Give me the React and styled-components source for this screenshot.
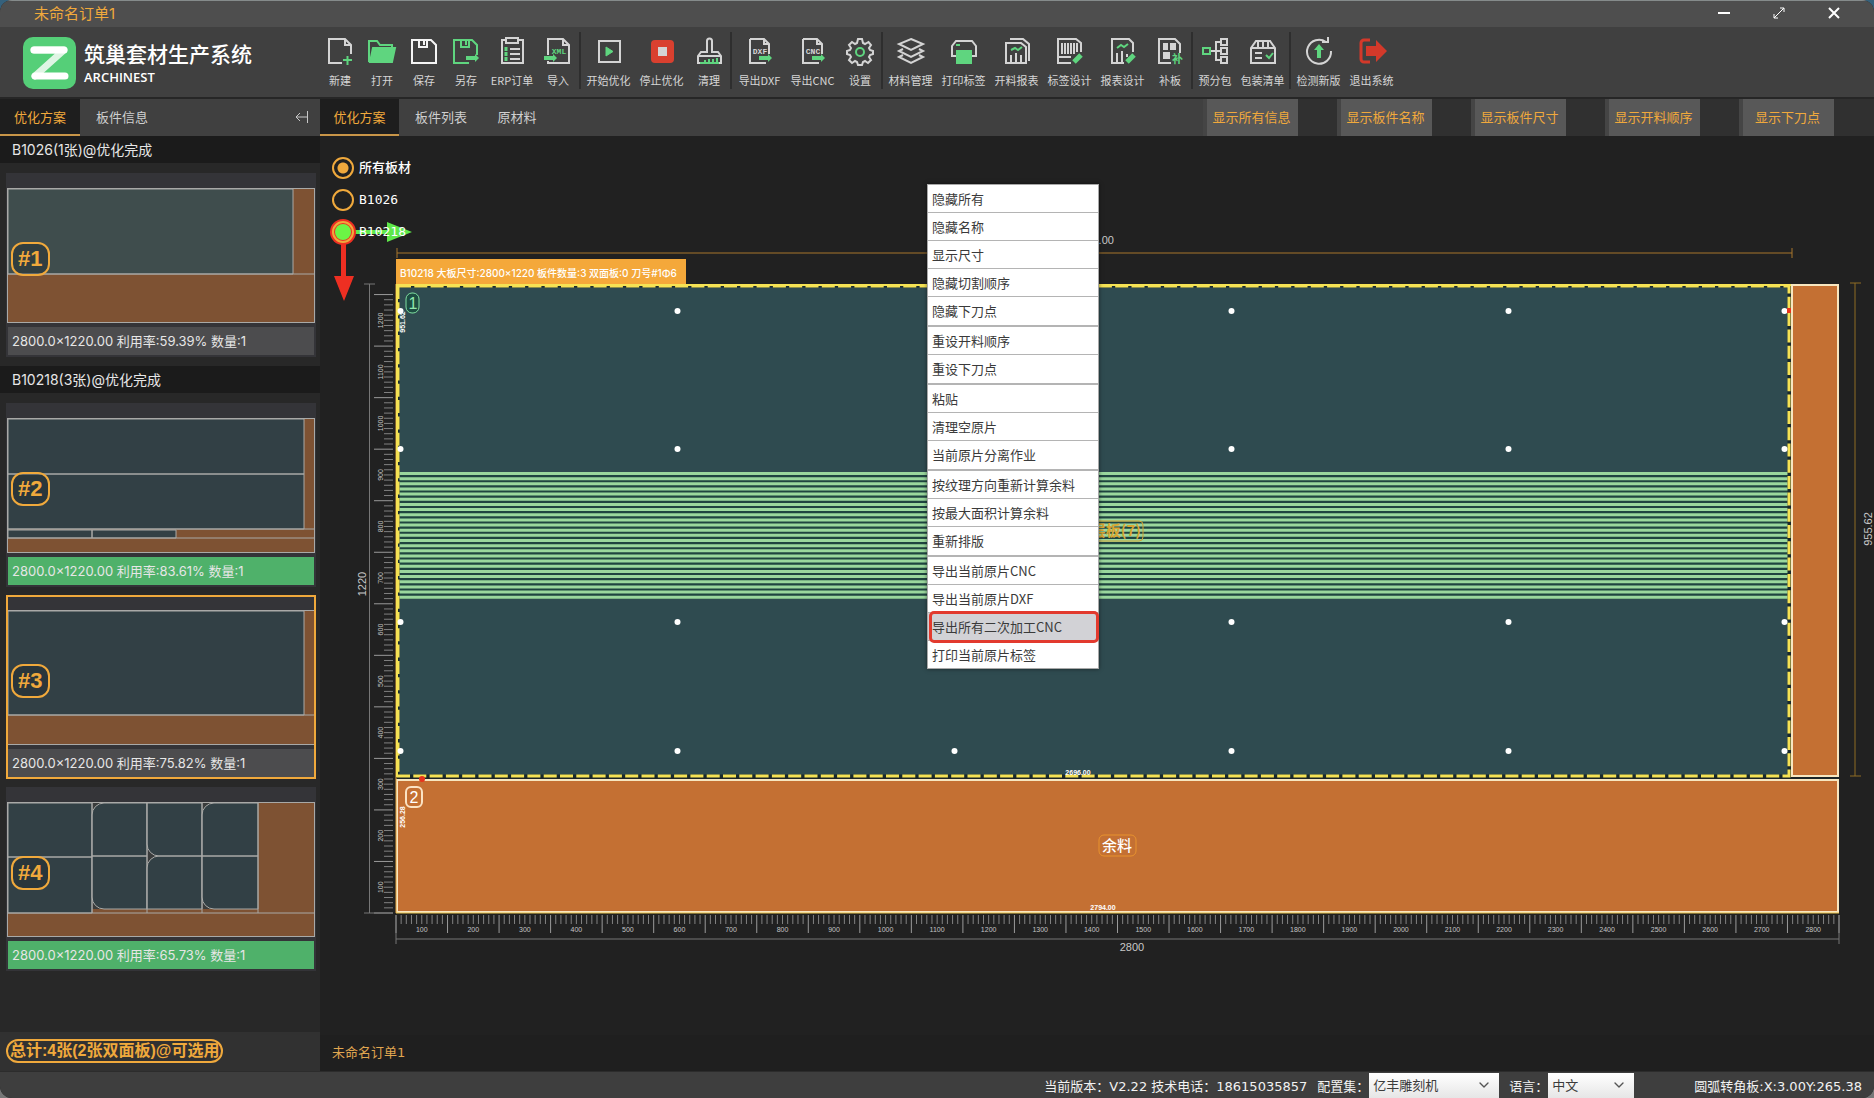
// Nesting workspace: toolbar, sheet list and cutting canvas
import { useState } from 'react'
import styled, { createGlobalStyle } from 'styled-components'
import { ChevronDown } from 'lucide-react'

const uiFont = `Inter, "Noto Sans CJK SC", sans-serif`
const cjkFont = `"Noto Sans CJK SC", sans-serif`
const gold = '#f0a93c'
const grey = '#d4d4d4'
const green = '#5fd57f'

const GlobalStyle = createGlobalStyle`
    * { box-sizing: border-box; }
    body {
        margin: 0;
        background: linear-gradient(#35617c, #777777);
        font-family: ${uiFont};
        font-size: 13px;
        color: #e6e6e6;
    }
    button, select, input { font: inherit; color: inherit; margin: 0; }
    button { border: 0; padding: 0; background: none; }
`

const Window = styled.div`
    min-height: 100vh;
    display: flex;
    flex-direction: column;
    background: #212121;
    border-radius: 12px;
    overflow: hidden;
`

const TitleBar = styled.header`
    height: 27px;
    display: flex;
    align-items: center;
    justify-content: space-between;
    padding: 0 34px 3px;
    background: #4e4e4e;
    border-top: 1px solid #858b8b;
    color: ${gold};
    font-size: 15px;
`

const WindowButtons = styled.div`
    display: flex;
    gap: 43px;
`

const WindowButton = styled.button`
    width: 12px;
    height: 22px;
    display: grid;
    place-items: center;
`

const TopBar = styled.div`
    height: 72px;
    display: flex;
    background: #404040;
    border-bottom: 2px solid #262626;
`

const Brand = styled.div`
    width: 319px;
    flex: none;
    display: flex;
    gap: 8px;
    padding: 9px 0 0 23px;
`

const BrandName = styled.h1`
    margin: 4px 0 0;
    font-family: "Open Sans", ${cjkFont};
    font-size: 21px;
    line-height: 28px;
    font-weight: 500;
    color: #ffffff;

    small {
        display: block;
        font-size: 13px;
        line-height: 18px;
        font-weight: 600;
    }
`

const ToolGroup = styled.div`
    display: flex;
    margin: 5px 0 8px;

    & + & {
        padding-left: 1px;
        border-left: 2px solid #2e2e2e;
    }
`

const ToolButton = styled.button`
    width: ${p => p.$width}px;
    display: flex;
    flex-direction: column;
    align-items: center;
    justify-content: flex-start;
    gap: 5px;
    font-family: ${cjkFont};
    font-size: 11px;
    line-height: 18px;
    white-space: nowrap;
    color: #d6d6d6;
`

const Body = styled.div`
    flex: 1;
    display: grid;
    grid-template-columns: 320px minmax(0, 1fr);
`

const Sidebar = styled.aside`
    display: flex;
    flex-direction: column;
    background: #282828;
`

const TabRow = styled.nav`
    height: 37px;
    display: flex;
    background: #404040;
    font-family: ${cjkFont};
`

const Tab = styled.button`
    width: ${p => p.$width}px;
    color: ${p => (p.$active ? gold : '#cfcfcf')};
    background: ${p => (p.$active ? '#1e1e1e' : 'transparent')};
    border-bottom: 2px solid ${p => (p.$active ? '#c89548' : 'transparent')};
`

const Collapse = styled.button`
    margin-left: auto;
    padding: 0 12px;
`

const GroupTitle = styled.h2`
    margin: 0 0 10px;
    padding-left: 12px;
    background: #1b1b1b;
    font-size: 14px;
    line-height: 27px;
    font-weight: 400;
`

const SheetList = styled.div`
    display: flex;
    flex-direction: column;
    gap: 8px;
    padding: 0 4px 9px 6px;
`

const SheetCard = styled.div`
    position: relative;
    padding: 15px 1px 2px;
    background: #343438;

    svg {
        display: block;
        width: 100%;
        height: auto;
    }

    &::after {
        content: '';
        position: absolute;
        inset: 0;
        border: 2px solid ${p => (p.$selected ? gold : 'transparent')};
        pointer-events: none;
    }
`

const SheetNumber = styled.span`
    position: absolute;
    left: 5px;
    top: 69px;
    padding: 0 5px;
    border: 2px solid ${gold};
    border-radius: 12px;
    background: rgba(30, 40, 44, 0.4);
    color: ${gold};
    font-family: "Liberation Sans", sans-serif;
    font-size: 22px;
    line-height: 30px;
    font-weight: 700;
`

const SheetInfo = styled.p`
    margin: 4px 1px 0;
    padding-left: 4px;
    line-height: 28px;
    background: ${p => (p.$done ? '#4fb16a' : '#4c4c4e')};
`

const SidebarFooter = styled.div`
    margin-top: auto;
    height: 39px;
    padding: 7px 6px;
    background: #313131;
`

const Total = styled.strong`
    display: inline-block;
    padding: 0 2px;
    border: 2px solid ${gold};
    border-radius: 12px;
    color: ${gold};
    font-family: "Liberation Sans", ${cjkFont};
    font-size: 16px;
    line-height: 20px;
    white-space: nowrap;
`

const Main = styled.main`
    display: flex;
    flex-direction: column;
`

const Toggles = styled.div`
    margin-left: auto;
    display: flex;
    gap: 39px;
    padding-right: 40px;
    background: linear-gradient(90deg, #404040 6px, #303030 6px);
`

const Toggle = styled.button`
    width: 95px;
    padding: 0 2px 2px 0;
    border-left: 4px solid #454545;
    background: #585858;
    color: ${gold};
`

const Workspace = styled.section`
    position: relative;
    flex: 1;
    overflow: hidden;
`

const Drawing = styled.svg`
    display: block;
    width: 100%;
    height: auto;
    font-family: "Liberation Sans", sans-serif;
`

const Materials = styled.fieldset`
    position: absolute;
    left: 12px;
    top: 21px;
    margin: 0;
    padding: 0;
    border: 0;
    display: grid;
    gap: 10px;
`

const Material = styled.label`
    display: flex;
    align-items: center;
    gap: 5px;
    font-family: "DejaVu Sans Mono", ${cjkFont};
    line-height: 22px;
    font-weight: 500;
    color: #ffffff;

    input {
        appearance: none;
        width: 22px;
        height: 22px;
        border: 2px solid ${gold};
        border-radius: 50%;
    }

    input:checked {
        background: radial-gradient(circle, ${gold} 5px, transparent 6px);
    }
`

const Menu = styled.ul`
    position: absolute;
    left: 607px;
    top: 48px;
    width: 172px;
    margin: 0;
    padding: 0;
    list-style: none;
    border: 1px solid #a8a8a8;
    background: #ffffff;
    box-shadow: 0 0 4px rgba(0, 0, 0, 0.5);
    font-family: ${cjkFont};
    color: #3a3a3a;
`

const MenuItem = styled.li`
    position: relative;
    padding-bottom: ${p => (p.$groupEnd ? 1 : 0)}px;
    border-bottom: ${p => (p.$groupEnd ? 2 : 1)}px solid #b4b4b4;
    background: ${p => (p.$marked ? '#d2d2d6' : '#ffffff')};

    &:last-child {
        padding-bottom: 0;
        border-bottom: 0;
    }

    button {
        width: 100%;
        padding-left: 4px;
        text-align: left;
        line-height: 27px;
    }

    &::after {
        content: '';
        display: ${p => (p.$marked ? 'block' : 'none')};
        position: absolute;
        inset: -2px -1px -3px 1px;
        border: 3px solid #e23a2e;
        border-radius: 5px;
        z-index: 1;
        pointer-events: none;
    }
`

const OrderBar = styled.div`
    height: 36px;
    padding-left: 12px;
    background: #1f1f1f;
    color: #e0a650;
    font-family: "DejaVu Sans", ${cjkFont};
    line-height: 36px;
`

const StatusBar = styled.footer`
    height: 27px;
    display: flex;
    align-items: center;
    justify-content: flex-end;
    gap: 10px;
    padding-right: 12px;
    background: #3e3e3e;
    border-top: 1px solid #2c2c2c;
    font-family: "DejaVu Sans", ${cjkFont};
    color: #f2f2f2;
    white-space: nowrap;
`

const Field = styled.label`
    position: relative;
    display: flex;
    align-items: center;

    select {
        appearance: none;
        width: ${p => p.$width}px;
        height: 25px;
        padding: 0 4px;
        border: 0;
        border-radius: 0;
        background: linear-gradient(#ffffff, #e6e6e6);
        color: #3c3c3c;
    }

    svg {
        position: absolute;
        right: 7px;
        pointer-events: none;
    }
`

const Coordinates = styled.span`
    margin-left: 50px;
`

const Page = () => <path d="M16 26H3V2h16l6 6v9M19 2v6h6" />
const Arrow = ({ x, y }) => (
    <path d={`M${x} ${y - 2}h9v-2l4 4-4 4v-2h-9z`} fill={green} stroke="none" />
)
const FileText = ({ children, color = grey, x = 14 }) => (
    <text x={x} y="17" textAnchor="middle" fontFamily="Liberation Mono" fontWeight="700" fontSize="8" fill={color} stroke="none">{children}</text>
)

const toolIcons = {
    create: <><Page /><path d="M17 23h9M21.500 19v9" stroke={green} /></>,
    open: <g stroke={green}><path d="M1 25V4h8l3 4h12v3" /><path d="M5 11h22l-3 14H2z" fill={green} /></g>,
    save: <path d="M2 3h19l5 5v18H2zM9 3v7h8V3M14 4v4" stroke="#f4f4f4" />,
    saveAs: <><path d="M17 26H2V3h18l5 5v10M9 3v7h8V3M14 4v4" stroke={green} /><Arrow x={14} y={21} /></>,
    erp: <><path d="M19 3h6v23H4V3h4M8 1h12v5H8zM12 12h10M12 17h10M12 22h10" /><path d="M8 10v4M8 15v4M8 20v4" stroke={green} strokeWidth="3" /></>,
    xml: <><path d="M4 18V2h15l6 6v18H4v-2M19 2v6h6" /><FileText color={green} x={15}>XML</FileText><Arrow x={0} y={21} /></>,
    start: <><path d="M4 4h21v21H4z" /><path d="M11 10v9l7-4.500z" fill={green} stroke={green} strokeWidth="1" /></>,
    stop: <><rect x="3" y="3" width="23" height="23" rx="4" fill="#d9402f" stroke="none" /><path d="M10 10h9v9h-9z" fill={grey} stroke="none" /></>,
    clean: <><path d="M12 15V4a2.500 2.500 0 0 1 5 0v11h6l3 4v7H3v-7l3-4zM3 19h23" /><path d="M10 25v-2M14 25v-3M18 25v-3M22 25v-4M5 26h19" stroke={green} /></>,
    dxf: <><path d="M4 2h14l5 5v10M18 2v5h5M4 2v24h16" /><FileText>DXF</FileText><Arrow x={13} y={21} /></>,
    cnc: <><path d="M4 2h14l5 5v10M18 2v5h5M4 2v24h16" /><FileText>CNC</FileText><Arrow x={13} y={21} /></>,
    settings: <><path d="M12 2h4l1 4 2 1 3.500-2 2.500 3-2 3 1 2 3 1v3l-3 1-1 2 2 3-3 3-3-2-2 1-1 3h-4l-1-3-2-1-3 2-3-3 2-3-1-2-3-1v-3l3-1 1-2-2-3 3-3 3 2 2-1z" /><circle cx="14" cy="15" r="4" stroke={green} /></>,
    layers: <path d="M14 2l12 5-12 6L2 7zM6 12l-4 2 12 6 12-6-4-2M6 18l-4 2 12 6 12-6-4-2" />,
    print: <><path d="M6 19H2V9l4-5h16l4 5v10h-4" /><path d="M7 14h14v12H7zM6 8h4" fill={green} stroke={green} /></>,
    report: <><path d="M3 6h15l5 4v16H3zM7 2h13l6 5v17" /><path d="M8 13l4-2 3 2 4-3" stroke={green} /><path d="M8 18v8M13 16v10M18 18v8" /></>,
    label: <><path d="M15 26H2V2h18l5 4v9M6 6v11M9 6v11M12 6v11M15 6v11M18 6v11M21 6v9M3 20h12" /><path d="M18 25l7-7" stroke={green} strokeWidth="5" /></>,
    reportEdit: <><path d="M15 26H3V2h17l4 4v9M8 16v10M13 14v12M18 17v3" /><path d="M8 11l4-3 3 2 4-3" stroke={green} /><path d="M18 25l7-7" stroke={green} strokeWidth="5" /></>,
    patch: <><path d="M15 26H3V2h16l5 5v9" /><path d="M7 6h5v7H7zM14 6h6v7h-6zM7 15h7v7H7z" fill={grey} stroke="none" /><text x="16" y="26" fontFamily="Noto Sans CJK SC" fontWeight="700" fontSize="11" fill={green} stroke="none">补</text></>,
    split: <><path d="M20 2h6v6h-6zM20 11h6v6h-6zM20 20h6v6h-6zM10 14h10M20 5h-5v18h5" /><path d="M2 11h7v6H2z" stroke={green} /></>,
    pack: <><path d="M2 11l5-7h14l5 7v15H2zM2 11h24M9 4v6M14 4v6M19 4v6M6 16h7M6 21h7" /><path d="M17 18l3 3 4-5" stroke={green} /></>,
    update: <><path d="M21 5A12 12 0 1 0 26 14M17 5h6V0" /><path d="M14 7l5 6h-3v8h-4v-8H9z" fill={green} stroke="none" /></>,
    exit: <g stroke="#d3392a"><path d="M12 3H6a3 3 0 0 0-3 3v16a3 3 0 0 0 3 3h6" strokeWidth="3" /><path d="M8 9h10V3l11 11-11 11v-6H8z" fill="#d3392a" stroke="none" /></g>
}

const toolGroups = [
    [['create', '新建', 42], ['open', '打开', 42], ['save', '保存', 42], ['saveAs', '另存', 42], ['erp', 'ERP订单', 50], ['xml', '导入', 42]],
    [['start', '开始优化', 53], ['stop', '停止优化', 53], ['clean', '清理', 42]],
    [['dxf', '导出DXF', 53], ['cnc', '导出CNC', 53], ['settings', '设置', 42]],
    [['layers', '材料管理', 53], ['print', '打印标签', 53], ['report', '开料报表', 53], ['label', '标签设计', 53], ['reportEdit', '报表设计', 53], ['patch', '补板', 42]],
    [['split', '预分包', 42], ['pack', '包装清单', 53]],
    [['update', '检测新版', 53], ['exit', '退出系统', 53]]
]

const menuGroups = [
    ['隐藏所有', '隐藏名称', '显示尺寸', '隐藏切割顺序', '隐藏下刀点'],
    ['重设开料顺序', '重设下刀点'],
    ['粘贴', '清理空原片', '当前原片分离作业'],
    ['按纹理方向重新计算余料', '按最大面积计算余料', '重新排版'],
    ['导出当前原片CNC', '导出当前原片DXF', '导出所有二次加工CNC', '打印当前原片标签']
]
const markedItem = '导出所有二次加工CNC'

const toggles = ['显示所有信息', '显示板件名称', '显示板件尺寸', '显示开料顺序', '显示下刀点']

// each layout is drawn on a 308 x 135 board, brown where material is left over
const layouts = {
    1: <><path d="M1 1h285v85H1z" fill="#3f4d4d" /><path d="M1 86h306" /></>,
    2: <><path d="M1 1h296v55H1zM1 56h296v55H1zM1 112h84v8H1zM85 112h84v8H85z" /><path d="M1 111h306M1 120h306" /></>,
    3: <><path d="M1 1h296v104H1z" /><path d="M1 105h306" /></>,
    4: <>
        <path d="M1 1h84v54H1zM1 55h84v56H1z" />
        <path d="M97 1h43v53H85V13A12 12 0 0 1 97 1zM85 54h55v53H97A12 12 0 0 1 85 95z" />
        <path d="M140 1h55v53h-43A12 12 0 0 1 140 42zM152 54h43v53h-55V66A12 12 0 0 1 152 54z" />
        <path d="M207 1h44v53h-56V13A12 12 0 0 1 207 1zM195 54h56v53h-44A12 12 0 0 1 195 95z" />
        <path d="M85 1v110M140 1v110M195 1v110M251 1v110M1 111h306" />
    </>
}

const groups = [
    { title: 'B1026(1张)@优化完成', sheets: [{ id: 1, rate: '59.39%' }] },
    { title: 'B10218(3张)@优化完成', sheets: [{ id: 2, rate: '83.61%', done: true }, { id: 3, rate: '75.82%' }, { id: 4, rate: '65.73%', done: true }] }
]

function Thumbnail({ id }) {
    return (
        <svg viewBox="0 0 308 135" fill="#324045" stroke="#a9a9a7" strokeWidth="1">
            <rect x="0.500" y="0.500" width="307" height="134" fill="#7e5233" />
            {id === 4 && <path d="M85 1h166v106H85z" fill="#3a3c3c" stroke="none" />}
            {layouts[id]}
        </svg>
    )
}

// board geometry, in canvas units
const left = 396
const right = 1839
const top = 284
const bottom = 913
const step = (right - left) / 28

const range = (n) => Array.from({ length: n }, (_, i) => i)

function Rulers() {
    return (
        <g stroke="#9a9a9a" fill="#c4c4c4" fontSize="7" textAnchor="middle">
            {range(281).map(i => (
                <path key={i} d={`M${left + i * step / 10} 915v${i % 10 ? 9 : 18}`} opacity={i % 10 ? 0.8 : 1} />
            ))}
            {range(121).map(i => (
                <path key={i} d={`M393 ${bottom - i * step / 10}h${i % 10 ? -9 : -19}`} opacity={i % 10 ? 0.8 : 1} />
            ))}
            <g stroke="none">
                {range(28).map(i => (
                    <text key={i} x={left + (i + 0.5) * step} y="932">{(i + 1) * 100}</text>
                ))}
                {range(12).map(i => {
                    const y = bottom - (i + 0.5) * step
                    return <text key={i} x="383" y={y} transform={`rotate(-90 383 ${y})`}>{(i + 1) * 100}</text>
                })}
            </g>
            <path d={`M${left} 939H${right}M${left} 915v29M${right} 915v29M369.500 ${top}V${bottom}M364 ${top}h11M364 ${bottom}h29`} fill="none" stroke="#777777" />
        </g>
    )
}

function Board() {
    const holes = [400, 677, 954, 1231, 1508, 1784]
    return (
        <Drawing viewBox="320 136 1554 899">
            <path d="M397 253H1792M397 248v10M1792 248v10" stroke="#a8762c" />
            <path d="M1855 283V776M1850 283h11M1850 776h11" stroke="#8f6d24" />
            <Rulers />
            <g fill="#c8c8c8" fontSize="11" textAnchor="middle">
                <text x="1094" y="244">2696.00</text>
                <text x="1132" y="951">2800</text>
                <text x="366" y="584" transform="rotate(-90 366 584)">1220</text>
                <text x="1872" y="529" transform="rotate(-90 1872 529)">955.62</text>
            </g>

            <rect x={left} y={top} width={right - left} height={bottom - top} fill="#1c2426" />
            <rect x="398" y="286" width="1391" height="490" fill="#2f4b50" />
            <rect x="398" y="472" width="1390" height="127" fill="#1f4440" />
            {range(25).map(i => (
                <path key={i} d={`M398 ${473.5 + i * step / 10}H1788`} stroke="#9ad79d" strokeWidth="3" />
            ))}
            <g fill="#c47033" stroke="#f7e6c0" strokeWidth="2">
                <rect x="1792" y="285" width="46" height="491" />
                <rect x="397" y="780" width="1441" height="132" />
            </g>
            <path d={`M${left} ${top}V${bottom}`} stroke="#e8a43a" />
            <path d={`M${left} ${bottom}H${right}`} stroke="#e8c24a" />
            <path d="M398 286V776H1789V286z" fill="none" stroke="#1a2a2c" strokeWidth="3" />
            <path d="M398 286V776H1789V286z" fill="none" stroke="#f5e254" strokeWidth="3" strokeDasharray="13 3.300" />
            <path d="M397 777V285H1791" fill="none" stroke="#f5e254" strokeWidth="2" />

            {[311, 449, 622, 751].map(y => holes.map(x => (
                <circle key={`${x}-${y}`} cx={x + 0.5} cy={y} r="3" fill="#ffffff" />
            )))}
            <g fill="#e8341c">
                <rect x="1787" y="308" width="4" height="5" />
                <circle cx="422" cy="779" r="3" />
            </g>

            <rect x="396" y="259" width="290" height="25" fill="#f4a83a" />
            <text x="400" y="277" fill="#ffffff" fontFamily={uiFont} fontSize="10" fontWeight="500">B10218 大板尺寸:2800×1220 板件数量:3 双面板:0 刀号#1Φ6</text>

            <g fill="#1d4d42" stroke="#7fdfa0">
                <rect x="406" y="293" width="13" height="20" rx="6" />
                <rect x="406" y="787" width="16" height="20" rx="5" fill="none" stroke="#fbe3c4" strokeWidth="2" />
            </g>
            <g textAnchor="middle" fontSize="16">
                <text x="413" y="309" fill="#8fe8ac">1</text>
                <text x="414" y="803" fill="#ffffff">2</text>
            </g>
            <g fill="#ffffff" fontSize="7" fontWeight="700" textAnchor="middle">
                <text x="405" y="322" transform="rotate(-90 405 322)">951.62</text>
                <text x="405" y="817" transform="rotate(-90 405 817)">256.28</text>
                <text x="1078" y="775">2696.00</text>
                <text x="1103" y="910">2794.00</text>
            </g>
            <g fill="none" stroke="#e8922f">
                <rect x="1099" y="835" width="37" height="21" rx="5" />
                <rect x="1043" y="521" width="100" height="20" rx="4" stroke="#d3a233" />
            </g>
            <text x="1117" y="851" textAnchor="middle" fill="#ffffff" fontFamily={cjkFont} fontSize="15" fontWeight="500">余料</text>
            <text x="1141" y="536" textAnchor="end" fill="#d9a632" fontFamily={cjkFont} fontSize="15" fontWeight="700">层板(7)</text>

            {/* origin marker with its two axes */}
            <path d="M354 230h33v-8l25 10-25 10v-8h-33z" fill="#5ee84a" />
            <path d="M341 243h5v33h8l-10 25-10-25h7z" fill="#ee2f22" />
            <circle cx="343" cy="232" r="13" fill="#ee2f22" />
            <circle cx="343" cy="232" r="8" fill="#6cf545" />
        </Drawing>
    )
}

export default function App() {
    const [material, setMaterial] = useState('所有板材')
    const [selected, setSelected] = useState(3)

    return (
        <>
            <GlobalStyle />
            <Window>
                <TitleBar>
                    <span>未命名订单1</span>
                    <WindowButtons>
                        <WindowButton aria-label="Minimize">
                            <svg width="12" height="12" stroke="#ffffff" strokeWidth="2"><path d="M0 6h12" /></svg>
                        </WindowButton>
                        <WindowButton aria-label="Maximize">
                            <svg width="12" height="12" fill="none" stroke="#ffffff"><path d="M1 11L11 1M7 1h4v4M1 7v4h4" /></svg>
                        </WindowButton>
                        <WindowButton aria-label="Close">
                            <svg width="12" height="12" stroke="#ffffff" strokeWidth="2"><path d="M1 1l10 10M11 1L1 11" /></svg>
                        </WindowButton>
                    </WindowButtons>
                </TitleBar>

                <TopBar>
                    <Brand>
                        <svg width="53" height="54" viewBox="0 0 53 54">
                            <rect y="1" width="53" height="52" rx="10" fill="#55cf78" />
                            <path d="M11 14h30L12 40" fill="none" stroke="#dff5e4" strokeWidth="7" strokeLinejoin="round" strokeLinecap="round" />
                            <path d="M11 14h30M12 40h30" stroke="#ffffff" strokeWidth="7" strokeLinecap="round" />
                        </svg>
                        <BrandName>筑巢套材生产系统<small>ARCHINEST</small></BrandName>
                    </Brand>
                    {toolGroups.map((group, i) => (
                        <ToolGroup key={i}>
                            {group.map(([icon, label, width]) => (
                                <ToolButton key={icon} $width={width}>
                                    <svg width="30" height="34" viewBox="-1 -5 30 34" fill="none" stroke={grey} strokeWidth="2">
                                        {toolIcons[icon]}
                                    </svg>
                                    {label}
                                </ToolButton>
                            ))}
                        </ToolGroup>
                    ))}
                </TopBar>

                <Body>
                    <Sidebar>
                        <TabRow>
                            <Tab $width={80} $active>优化方案</Tab>
                            <Tab $width={84}>板件信息</Tab>
                            <Collapse aria-label="Collapse">
                                <svg width="13" height="12" fill="none" stroke="#c8c8c8"><path d="M12.500 0v12M12 6H1M5 2L1 6l4 4" /></svg>
                            </Collapse>
                        </TabRow>
                        {groups.map(group => (
                            <section key={group.title}>
                                <GroupTitle>{group.title}</GroupTitle>
                                <SheetList>
                                    {group.sheets.map(sheet => (
                                        <SheetCard key={sheet.id} $selected={sheet.id === selected} onClick={() => setSelected(sheet.id)}>
                                            <Thumbnail id={sheet.id} />
                                            <SheetNumber>#{sheet.id}</SheetNumber>
                                            <SheetInfo $done={sheet.done}>2800.0×1220.00 利用率:{sheet.rate} 数量:1</SheetInfo>
                                        </SheetCard>
                                    ))}
                                </SheetList>
                            </section>
                        ))}
                        <SidebarFooter>
                            <Total>总计:4张(2张双面板)@可选用</Total>
                        </SidebarFooter>
                    </Sidebar>

                    <Main>
                        <TabRow>
                            <Tab $width={79} $active>优化方案</Tab>
                            <Tab $width={84}>板件列表</Tab>
                            <Tab $width={68}>原材料</Tab>
                            <Toggles>
                                {toggles.map(label => <Toggle key={label}>{label}</Toggle>)}
                            </Toggles>
                        </TabRow>
                        <Workspace>
                            <Board />
                            <Materials>
                                {['所有板材', 'B1026', 'B10218'].map(name => (
                                    <Material key={name}>
                                        <input
                                            type="radio"
                                            name="material"
                                            checked={material === name}
                                            onChange={() => setMaterial(name)}
                                        />
                                        {name}
                                    </Material>
                                ))}
                            </Materials>
                            <Menu>
                                {menuGroups.map(items => items.map((item, i) => (
                                    <MenuItem key={item} $groupEnd={i === items.length - 1} $marked={item === markedItem}>
                                        <button>{item}</button>
                                    </MenuItem>
                                )))}
                            </Menu>
                        </Workspace>
                        <OrderBar>未命名订单1</OrderBar>
                    </Main>
                </Body>

                <StatusBar>
                    <span>当前版本：V2.22 技术电话：18615035857</span>
                    <Field $width={130}>
                        配置集：
                        <select defaultValue="亿丰雕刻机"><option>亿丰雕刻机</option></select>
                        <ChevronDown size={16} color="#555555" />
                    </Field>
                    <Field $width={86}>
                        语言：
                        <select defaultValue="中文"><option>中文</option></select>
                        <ChevronDown size={16} color="#555555" />
                    </Field>
                    <Coordinates>圆弧转角板:X:3.00Y:265.38</Coordinates>
                </StatusBar>
            </Window>
        </>
    )
}
